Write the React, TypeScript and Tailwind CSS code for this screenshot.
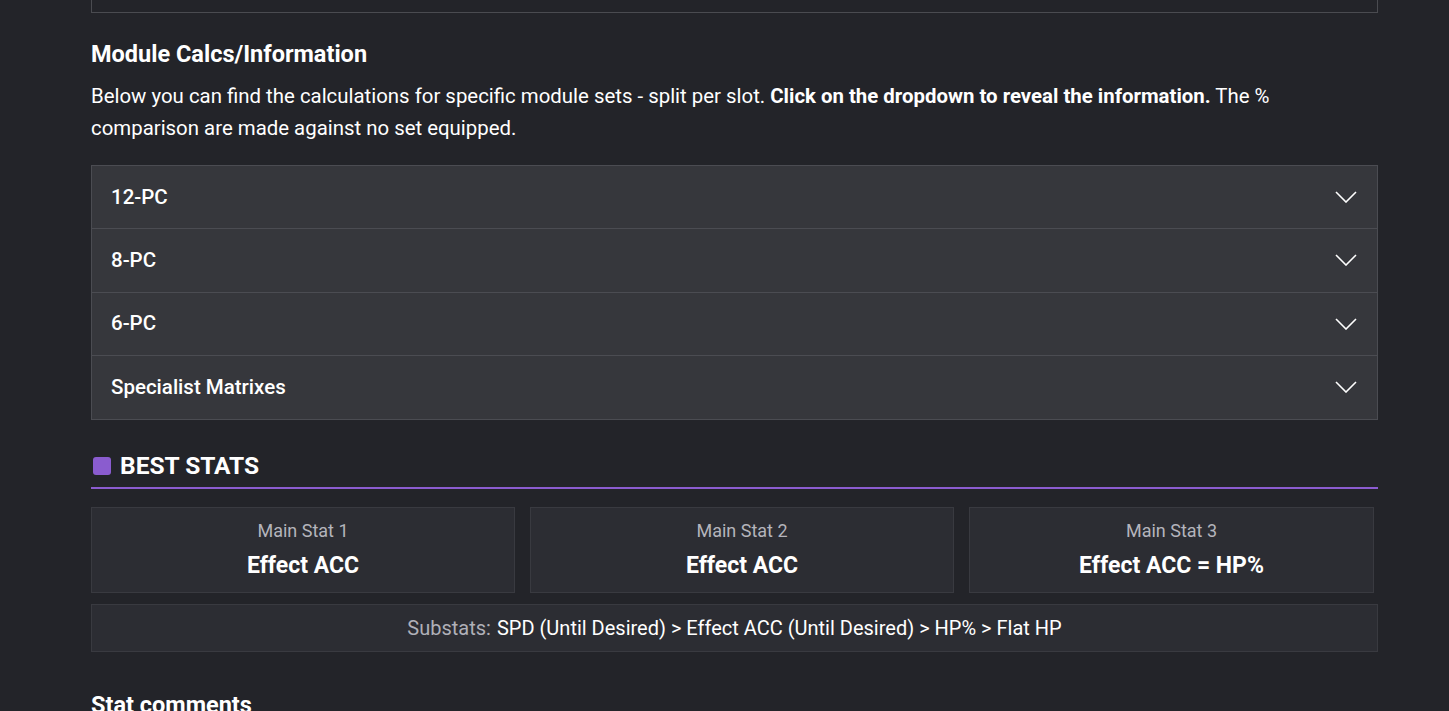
import { useState } from "react";

const sets = ["12-PC", "8-PC", "6-PC", "Specialist Matrixes"];

const mainStats = [
  { label: "Main Stat 1", value: "Effect ACC" },
  { label: "Main Stat 2", value: "Effect ACC" },
  { label: "Main Stat 3", value: "Effect ACC = HP%" },
];

function Chevron() {
  return (
    <svg width="22" height="12" viewBox="0 0 22 12" fill="none" className="shrink-0">
      <path d="M1 1l10 10L21 1" stroke="white" strokeWidth="1.6" />
    </svg>
  );
}

export default function App() {
  const [open, setOpen] = useState<string | null>(null);

  return (
    <div className="min-h-screen bg-[#232429] text-white font-['Roboto',sans-serif] overflow-hidden">
      <div className="mx-[91px] w-[1287px]">
        {/* end of previous panel */}
        <div className="h-[13px] border border-t-0 border-[#4a4b50]" />

        {/* Module calcs */}
        <h2 className="mt-[25px] text-[23.5px] leading-[32px] font-bold">Module Calcs/Information</h2>
        <p className="mt-[10px] text-[20.4px] leading-[32px]">
          Below you can find the calculations for specific module sets - split per slot.{" "}
          <strong className="font-bold">Click on the dropdown to reveal the information.</strong> The %
          comparison are made against no set equipped.
        </p>

        <div className="mt-[21px] border border-[#4b4c52] bg-[#36373c]">
          {sets.map((name, i) => (
            <button
              key={name}
              onClick={() => setOpen(open === name ? null : name)}
              className={`flex h-[63.25px] w-full items-center justify-between pl-[19px] pr-5 text-left text-[20.5px] font-medium ${
                i < sets.length - 1 ? "border-b border-[#4b4c52]" : ""
              }`}
            >
              {name}
              <Chevron />
            </button>
          ))}
        </div>

        {/* Best stats */}
        <div className="mt-[30px] flex items-center gap-[9px] border-b-2 border-[#8b5cd0] pb-[5px] pl-[2px]">
          <span className="h-[18px] w-[18px] rounded-[3px] bg-[#8a5ccf]" />
          <h3 className="text-[24.5px] leading-[32px] font-bold">BEST STATS</h3>
        </div>

        <div className="mt-[18px] grid grid-cols-[424px_424px_405px] gap-[15px]">
          {mainStats.map((s) => (
            <div
              key={s.label}
              className="flex h-[86px] flex-col items-center justify-center border border-[#393a40] bg-[#2c2d33]"
            >
              <span className="text-[18px] leading-[22px] text-[#b4b4bc]">{s.label}</span>
              <span className="mt-[10px] text-[23px] leading-[28px] font-bold">{s.value}</span>
            </div>
          ))}
        </div>

        <div className="mt-[11px] flex h-[48px] items-center justify-center border border-[#393a40] bg-[#2c2d33] text-[20px]">
          <span className="text-[#b0b0b8]">Substats:</span>
          <span className="ml-[6px]">SPD (Until Desired) &gt; Effect ACC (Until Desired) &gt; HP% &gt; Flat HP</span>
        </div>

        <h2 className="mt-[37px] text-[23.5px] leading-[32px] font-bold">Stat comments</h2>
      </div>
    </div>
  );
}
